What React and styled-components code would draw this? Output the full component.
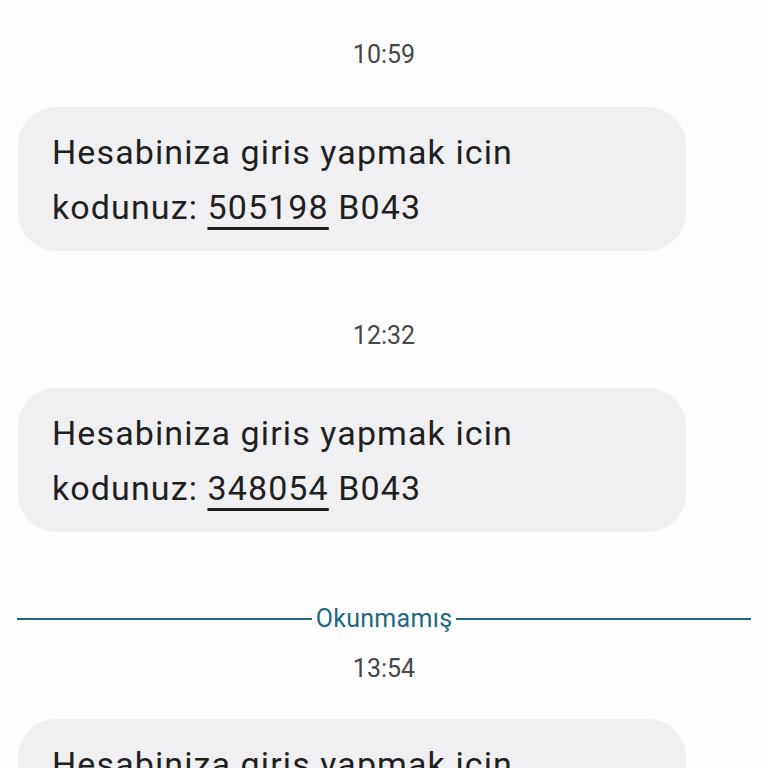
import React from 'react';
import styled, { createGlobalStyle } from 'styled-components';

const GlobalStyle = createGlobalStyle`
  html, body {
    margin: 0;
    padding: 0;
    background: #fdfcff;
  }
  body {
    font-family: Roboto, "Noto Sans", "Liberation Sans", sans-serif;
    -webkit-font-smoothing: antialiased;
  }
`;

const Thread = styled.div`
  display: flex;
  flex-direction: column;
  width: 768px;
  height: 768px;
  overflow: hidden;
  padding-top: 40px;
  box-sizing: border-box;
`;

const Time = styled.div`
  margin-top: ${(props) => props.gap || 0}px;
  height: 30px;
  line-height: 30px;
  text-align: center;
  font-size: 25px;
  color: #474747;
`;

const Bubble = styled.div`
  margin: ${(props) => props.gap || 37}px 0 0 18px;
  width: 668px;
  box-sizing: border-box;
  padding: 18px 34px 16px;
  border-radius: 38px;
  background-color: #f0f0f2;
  color: #1f1f1f;
  font-size: 34px;
  line-height: 55px;
  letter-spacing: 1.1px;
`;

const Code = styled.span`
  text-decoration: underline;
  text-decoration-thickness: 3px;
  text-underline-offset: 8px;
`;

const Divider = styled.div`
  display: flex;
  align-items: center;
  gap: 4px;
  margin: 72px 17px 0 17px;
  height: 30px;
  color: #1e6a80;
  font-size: 25px;
  letter-spacing: 0.3px;

  &::before,
  &::after {
    content: '';
    flex: 1;
    height: 2px;
    background-color: #1e6a80;
  }
`;

const Message = ({ code, gap }) => (
  <Bubble gap={gap}>
    Hesabiniza giris yapmak icin
    <br />
    kodunuz: <Code>{code}</Code> B043
  </Bubble>
);

const App = () => {
  return (
    <>
      <GlobalStyle />
      <Thread>
        <Time>10:59</Time>
        <Message code="505198" />
        <Time gap={70}>12:32</Time>
        <Message code="348054" />
        <Divider>Okunmamış</Divider>
        <Time gap={21}>13:54</Time>
        <Message code="" gap={35} />
      </Thread>
    </>
  );
};

export default App;
